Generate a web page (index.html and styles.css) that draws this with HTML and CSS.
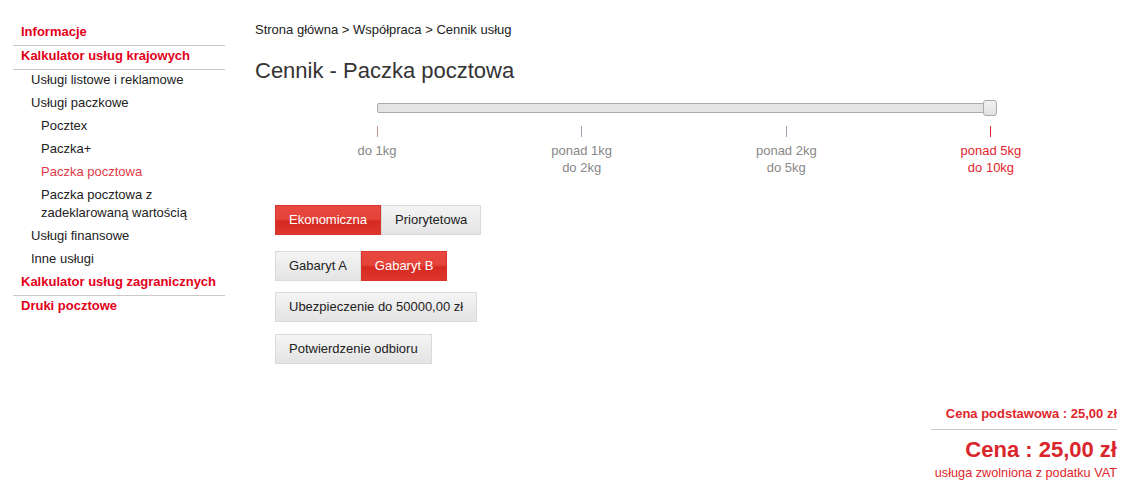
FILE: index.html
```html
<!DOCTYPE html>
<html lang="pl">
<head>
<meta charset="utf-8">
<title>Cennik - Paczka pocztowa</title>
<link rel="stylesheet" href="styles.css">
</head>
<body>
<div class="page">
  <nav class="sidebar">
    <a class="nav-top bordered" href="#">Informacje</a>
    <a class="nav-top bordered" href="#">Kalkulator usług krajowych</a>
    <a class="nav-sub" href="#">Usługi listowe i reklamowe</a>
    <a class="nav-sub" href="#">Usługi paczkowe</a>
    <a class="nav-sub2" href="#">Pocztex</a>
    <a class="nav-sub2" href="#">Paczka+</a>
    <a class="nav-sub2 active" href="#">Paczka pocztowa</a>
    <a class="nav-sub2" href="#">Paczka pocztowa z zadeklarowaną wartością</a>
    <a class="nav-sub" href="#">Usługi finansowe</a>
    <a class="nav-sub" href="#">Inne usługi</a>
    <a class="nav-top bordered" href="#">Kalkulator usług zagranicznych</a>
    <a class="nav-top" href="#">Druki pocztowe</a>
  </nav>
  <main class="main">
    <div class="breadcrumb">Strona główna &gt; Współpraca &gt; Cennik usług</div>
    <h1 class="title">Cennik - Paczka pocztowa</h1>
    <div class="slider"><span class="handle"></span></div>
    <div class="ticks">
      <div class="tick">do 1kg</div>
      <div class="tick">ponad 1kg<br>do 2kg</div>
      <div class="tick">ponad 2kg<br>do 5kg</div>
      <div class="tick selected">ponad 5kg<br>do 10kg</div>
    </div>
    <div class="options">
      <div class="btn-group">
        <button class="btn on">Ekonomiczna</button><button class="btn">Priorytetowa</button>
      </div>
      <div class="btn-group row2">
        <button class="btn">Gabaryt A</button><button class="btn on">Gabaryt B</button>
      </div>
      <div class="btn-group row3">
        <button class="btn">Ubezpieczenie do 50000,00 zł</button>
      </div>
      <div class="btn-group row4">
        <button class="btn">Potwierdzenie odbioru</button>
      </div>
    </div>
    <div class="price">
      <div class="price-base">Cena podstawowa : 25,00 zł</div>
      <div class="price-total">Cena : 25,00 zł</div>
      <div class="price-note">usługa zwolniona z podatku VAT</div>
    </div>
  </main>
</div>
</body>
</html>
```
FILE: styles.css
```css
* { box-sizing: border-box; }
html, body { margin: 0; padding: 0; background: #fff; }
body {
  font-family: "Liberation Sans", Arial, sans-serif;
  font-size: 13px;
  color: #222;
}
.page {
  display: flex;
  align-items: flex-start;
  padding: 0 24px 0 13px;
}
.sidebar {
  flex: none;
  width: 212px;
  margin-top: 22px;
  display: flex;
  flex-direction: column;
}
.sidebar a {
  display: block;
  text-decoration: none;
  line-height: 18px;
  font-size: 13px;
  padding-top: 1px;
  padding-bottom: 4px;
}
.nav-top {
  color: #e2001a;
  font-weight: bold;
  padding-left: 8px;
}
.nav-top.bordered {
  border-bottom: 1px solid #c9c9c9;
}
.nav-sub {
  color: #222;
  padding-left: 18px;
}
.nav-sub2 {
  color: #222;
  padding-left: 28px;
  padding-right: 0;
}
.nav-sub2.active { color: #e03a48; }

.main {
  flex: none;
  margin-left: 30px;
  width: 862px;
  padding-top: 21px;
  display: flex;
  flex-direction: column;
}
.breadcrumb {
  font-size: 13px;
  line-height: 18px;
  color: #222;
}
.title {
  margin: 20px 0 0;
  font-size: 22px;
  line-height: 24px;
  font-weight: normal;
  color: #333;
}
.slider {
  position: relative;
  margin: 20px 0 0 122px;
  width: 620px;
  height: 10px;
  border: 1px solid #aaa;
  border-radius: 2px;
  background: #e4e4e4;
}
.handle {
  position: absolute;
  right: -1px;
  top: -4px;
  width: 14px;
  height: 16px;
  border: 1px solid #aaa;
  border-radius: 3px;
  background: linear-gradient(#f2f2f2, #e2e2e2);
}
.ticks {
  display: flex;
  justify-content: space-between;
  margin: 13px 0 0 72px;
  width: 714px;
}
.tick {
  width: 100px;
  text-align: center;
  font-size: 13px;
  line-height: 17px;
  color: #888;
}
.tick::before {
  content: "";
  display: block;
  width: 1px;
  height: 11px;
  margin: 0 auto 5px;
  background: #9aa3b0;
}
.tick:first-child::before { background: #c89a86; }
.tick.selected { color: #e3262d; }
.tick.selected::before { background: #e3262d; }

.options {
  margin: 29px 0 0 20px;
  display: flex;
  flex-direction: column;
  align-items: flex-start;
}
.btn-group { display: flex; }
.row2 { margin-top: 16px; }
.row3 { margin-top: 11px; }
.row4 { margin-top: 12px; }
.btn {
  font-family: "Liberation Sans", Arial, sans-serif;
  font-size: 13px;
  height: 30px;
  line-height: 28px;
  padding: 0 13px;
  margin: 0;
  border: 1px solid #dadada;
  border-radius: 0;
  color: #222;
  background: linear-gradient(#f4f4f4, #e4e4e4);
  cursor: pointer;
}
.btn.on {
  color: #fff;
  border-color: #d9352b;
  background: linear-gradient(#e8483f 0%, #e5443b 45%, #d62a21 55%, #dd362c 100%);
}

.price {
  width: 186px;
  margin: 42px 0 0 auto;
  text-align: right;
  color: #e0262b;
}
.price-base {
  font-size: 13px;
  line-height: 16px;
  font-weight: bold;
  color: #e0262b;
  padding-bottom: 7px;
  border-bottom: 1px solid #c9c9c9;
}
.price-total {
  margin-top: 7px;
  font-size: 22px;
  line-height: 26px;
  font-weight: bold;
  color: #d9262c;
}
.price-note {
  margin-top: 2px;
  font-size: 12.7px;
  line-height: 16px;
  white-space: nowrap;
  color: #e0262b;
}
```
